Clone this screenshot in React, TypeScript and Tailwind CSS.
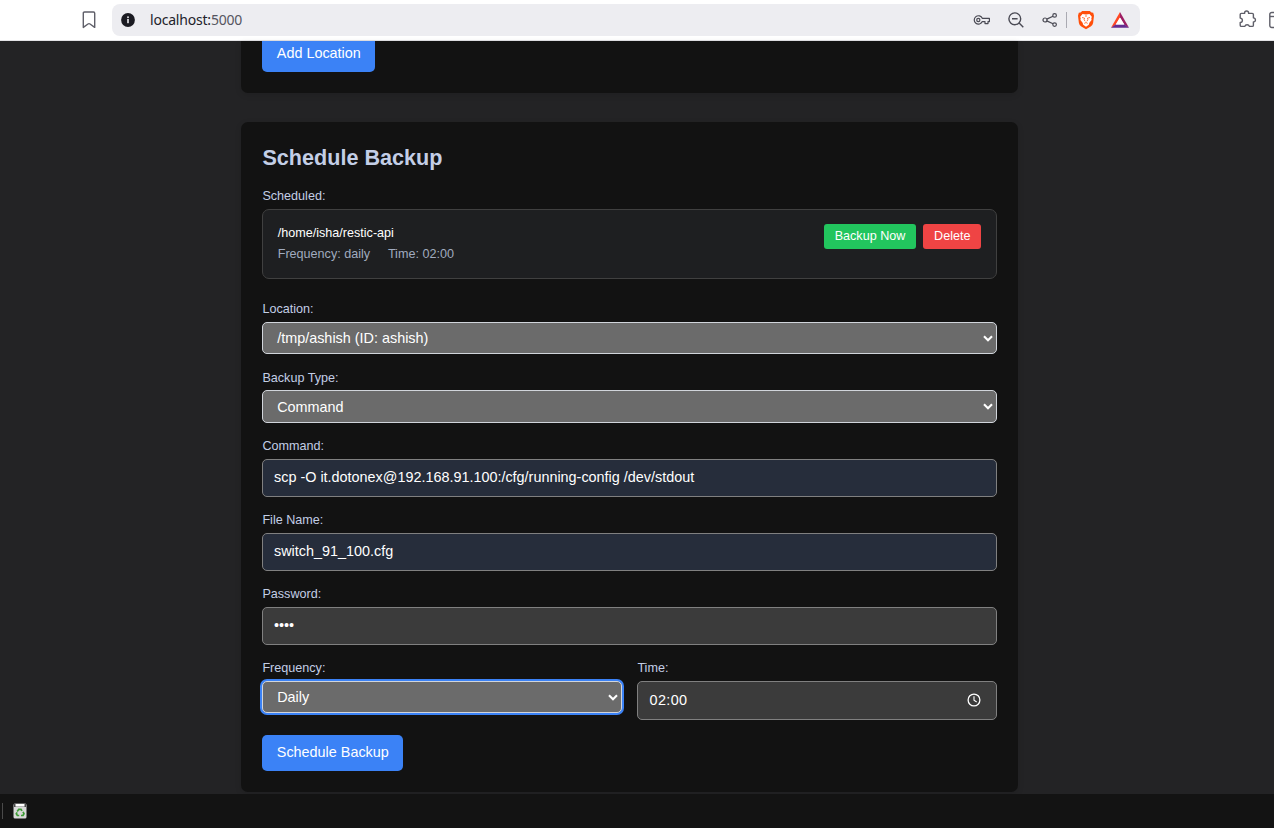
import React from 'react';

const Label = ({ children }: { children: React.ReactNode }) => (
  <div className="h-[18px] pl-[0.4px] text-[12.6px] leading-[18px] text-[#c3cee6]">{children}</div>
);

const Chevron = () => (
  <svg width="10" height="7" viewBox="0 0 10 7" fill="none" stroke="#fff" strokeWidth="2.1">
    <path d="M1 1.2 5 5.2 9 1.2" />
  </svg>
);

const SelectBox = ({ value, className = '' }: { value: string; className?: string }) => (
  <div
    className={`flex items-center justify-between rounded-[5px] border border-[#d1d5db] bg-[#6b6b6b] pl-[14.2px] pr-[3px] text-[14.4px] text-white ${className}`}
  >
    <span className="pt-px leading-[19px]">{value}</span>
    <Chevron />
  </div>
);

const InputBox = ({ value, className = '' }: { value: string; className?: string }) => (
  <div
    className={`mt-1 flex h-[38px] items-start rounded-[5px] border border-[#808080] pl-[11px] pt-2 text-[14.4px] leading-[19px] text-white ${className}`}
  >
    {value}
  </div>
);

const Toolbar = () => (
  <header className="flex h-[41px] shrink-0 items-start border-b border-[#e3e3e6] bg-white pl-[82px] pt-1">
    <svg className="mt-[7px] shrink-0" width="14" height="18" viewBox="0 0 14 18" fill="none" stroke="#5f5f69" strokeWidth="1.4">
      <path d="M1.3 2.2Q1.3 1 2.5 1h9q1.2 0 1.2 1.2v14.2L8 13q-1-.7-2 0l-4.7 3.4Z" strokeLinejoin="round" />
    </svg>
    <div className="ml-4 flex h-8 w-[1028px] shrink-0 items-center rounded-lg bg-[#ededf1] pl-2">
      <svg width="16" height="16" viewBox="0 0 16 16">
        <circle cx="8" cy="8" r="6.9" fill="#1b1b22" />
        <rect x="7.2" y="4.4" width="1.6" height="1.7" fill="#ededf1" />
        <rect x="7.2" y="7" width="1.6" height="4.2" fill="#ededf1" />
      </svg>
      <div className="ml-3.5 grow font-['Noto_Sans',sans-serif] text-[14px] leading-5 tracking-[-0.2px] text-[#22222a]">
        localhost:<span className="text-[#555560]">5000</span>
      </div>
      <div className="flex items-center pr-[11px]">
        <svg width="18" height="12" viewBox="0 0 18 12" fill="none" stroke="#4a4a54" strokeWidth="1.2">
          <path d="M9.3 4.3H16.4V7.6H15V9.6H12V7.6H9.3A4.2 4.2 0 1 1 9.3 4.3Z" strokeLinejoin="round" />
          <circle cx="5.3" cy="6" r="1.6" />
        </svg>
        <svg className="ml-4" width="18" height="18" viewBox="0 0 18 18" fill="none" stroke="#4a4a54" strokeWidth="1.4">
          <circle cx="7.8" cy="7.8" r="5.9" />
          <path d="M5 7.8h5.6M12.1 12.1l4.2 4.2" />
        </svg>
        <svg className="ml-[17px]" width="16" height="16" viewBox="0 0 16 16" fill="none" stroke="#4a4a54" strokeWidth="1.2">
          <circle cx="3" cy="8" r="2" />
          <circle cx="12.6" cy="3.4" r="1.8" />
          <circle cx="12.6" cy="12.6" r="1.8" />
          <path d="M4.8 7.1 11 4.2M4.8 8.9 11 11.8" />
        </svg>
        <span className="ml-2 h-4 w-px bg-[#aaaab2]" />
        <svg className="ml-2.5" width="18" height="20" viewBox="0 0 18 20">
          <path d="M5.2 1h7.6l1.7 1.5 1.7.2.8 3-.9 7.2q-.4 2.3-2.4 3.6L9 19.3l-4.7-2.8q-2-1.3-2.4-3.6L1 5.7l.8-3 1.7-.2Z" fill="#ff4f0a" />
          <path d="M5.5 4 9 4.5l3.5-.5 2.3 2.8-.5 1.7.3 1.6-2.2 2.6-.6 2L9 16.8l-2.8-2.1-.6-2-2.2-2.6.3-1.6-.5-1.7Z" fill="#fff" />
          <path d="m5 7.5 2.6.7-.5 1.5 1 1.6M13 7.5l-2.6.7.5 1.5-1 1.6M9 5v2M7.3 13.4 9 12.5l1.7.9" fill="none" stroke="#ff4f0a" strokeWidth=".75" />
        </svg>
        <svg className="ml-4" width="18" height="16" viewBox="0 0 18 16">
          <path d="M9 0 0 15.8 4.5 13 9 5.4Z" fill="#ff4724" />
          <path d="M9 0 18 15.8 13.5 13 9 5.4Z" fill="#9e1f63" />
          <path d="M0 15.8h18l-4.5-3.4h-9Z" fill="#662d91" />
          <path d="M9 5.4 4.7 12.5h8.6Z" fill="#fff" />
        </svg>
      </div>
    </div>
    <svg className="ml-[98px] mt-[6px] shrink-0" width="19" height="19" viewBox="0 0 19 19" fill="none" stroke="#5f5f69" strokeWidth="1.4">
      <path d="M3.4 3.4H6.6V3a2 2 0 0 1 4 0v.4h3.6q1.2 0 1.2 1.2V7.8l1 .4a1.9 1.9 0 0 1 0 3.4l-1 .4v3.2q0 1.2-1.2 1.2H11.4a2.4 2.4 0 0 0-4.6 0H3.4q-1.2 0-1.2-1.2v-2.7a2.2 2.2 0 0 0 0-4.4V4.6q0-1.2 1.2-1.2Z" strokeLinejoin="round" />
    </svg>
    <svg className="ml-3 mt-[7px] shrink-0" width="18" height="18" viewBox="0 0 18 18" fill="none" stroke="#5f5f69" strokeWidth="1.4">
      <rect x=".8" y="1.5" width="16" height="15" rx="2" />
      <path d="M1 5.5h16" />
    </svg>
  </header>
);

export default function App() {
  return (
    <div className="flex h-[828px] w-[1274px] flex-col overflow-hidden bg-[#232325] font-['Liberation_Sans',Arial,sans-serif]">
      <Toolbar />
      <main className="flex h-[753px] shrink-0 flex-col pl-[241px]">
        <section className="h-[52px] w-[777px] shrink-0 rounded-b-[7px] bg-[#121212] pl-[21px] shadow-[0_2px_6px_rgba(0,0,0,0.12)]">
          <button className="flex h-[31px] w-[113px] items-start justify-center rounded-b-[5px] bg-[#3b82f6] pl-[0.6px] pt-[3px] text-[14.4px] leading-[18px] text-white">
            Add Location
          </button>
        </section>
        <section className="mt-[29px] h-[670px] w-[777px] shrink-0 rounded-[7px] bg-[#121212] px-[21px] pt-5 shadow-[0_2px_6px_rgba(0,0,0,0.12)]">
          <h2 className="h-8 pl-[0.4px] text-[21.6px] font-bold leading-8 text-[#c3cee6]">Schedule Backup</h2>
          <div className="mt-[13px]">
            <Label>Scheduled:</Label>
          </div>
          <div className="mt-1 flex h-[70px] justify-between rounded-[7px] border border-[#404040] bg-[#1e1f21] pl-[14.7px] pr-[15px] pt-3.5">
            <div className="text-[12.6px] leading-[18px]">
              <div className="text-white">/home/isha/restic-api</div>
              <div className="mt-[3px] flex gap-[17.8px] text-[#a0abbf]">
                <span>Frequency: daily</span>
                <span>Time: 02:00</span>
              </div>
            </div>
            <div className="flex gap-[7px] text-[12.6px] leading-[25px] text-white">
              <button className="h-[25px] w-[92px] rounded-[3px] bg-[#22c55e]">Backup Now</button>
              <button className="h-[25px] w-[58px] rounded-[3px] bg-[#ef4444] pl-[0.6px]">Delete</button>
            </div>
          </div>
          <div className="mt-[21px]">
            <Label>Location:</Label>
            <SelectBox value="/tmp/ashish (ID: ashish)" className="mt-1 h-8" />
          </div>
          <div className="mt-[15px]">
            <Label>Backup Type:</Label>
            <SelectBox value="Command" className="mt-[3px] h-[33px]" />
          </div>
          <div className="mt-3.5">
            <Label>Command:</Label>
            <InputBox value="scp -O it.dotonex@192.168.91.100:/cfg/running-config /dev/stdout" className="bg-[#262d3b]" />
          </div>
          <div className="mt-3.5">
            <Label>File Name:</Label>
            <InputBox value="switch_91_100.cfg" className="bg-[#262d3b]" />
          </div>
          <div className="mt-3.5">
            <Label>Password:</Label>
            <InputBox value="••••" className="bg-[#3b3b3b]" />
          </div>
          <div className="mt-3.5 grid grid-cols-2 gap-[15px]">
            <div>
              <Label>Frequency:</Label>
              <SelectBox value="Daily" className="mt-1 h-8 ring-2 ring-[#3b82f6]" />
            </div>
            <div>
              <Label>Time:</Label>
              <div className="mt-1 flex h-[39px] items-center justify-between rounded-[5px] border border-[#808080] bg-[#3b3b3b] pl-[11.5px] pr-[15px] text-[14.4px] text-white">
                <span className="tracking-[0.4px]">02:00</span>
                <svg className="mb-px" width="14" height="14" viewBox="0 0 14 14" fill="none" stroke="#fff" strokeWidth="1.3">
                  <circle cx="7" cy="7" r="5.9" />
                  <path d="M7 3.3v4l2.7 1.7" strokeWidth="1.1" />
                </svg>
              </div>
            </div>
          </div>
          <button className="mt-[15px] flex h-9 w-[141px] items-start justify-center rounded-[5px] bg-[#3b82f6] pl-[0.6px] pt-2 text-[14.4px] leading-[18px] text-white">
            Schedule Backup
          </button>
        </section>
      </main>
      <footer className="flex h-[34px] shrink-0 items-center bg-[#131313] pl-0.5">
        <span className="h-4 w-px bg-[#4a4a4a]" />
        <svg className="ml-2.5" width="14" height="16" viewBox="0 0 14 16">
          <rect x=".5" y=".5" width="13" height="15" rx="1.5" fill="#d8d8d8" />
          <rect x="1" y=".5" width="12" height="3.5" fill="#4a4a4a" />
          <rect x="2.5" y="1" width="9" height="2.6" fill="#fff" />
          <path d="m4.2 8.6 1.6-2.3h2.2l1 1.6M10 8.8l1 1.9-1 1.8H8M6.2 12.5H4.4l-1.1-1.8.8-1.3" fill="none" stroke="#3d9b35" strokeWidth="1.7" />
        </svg>
      </footer>
    </div>
  );
}
